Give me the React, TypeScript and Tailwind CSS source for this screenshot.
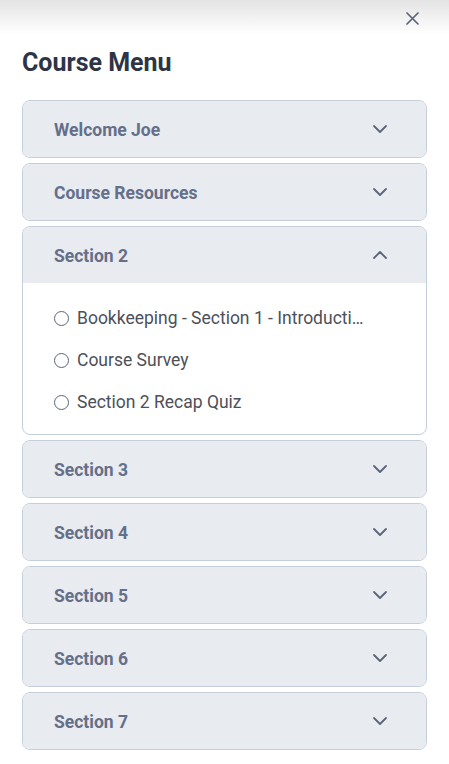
import React from "react";

const sections = [
  "Welcome Joe",
  "Course Resources",
  "Section 2",
  "Section 3",
  "Section 4",
  "Section 5",
  "Section 6",
  "Section 7",
];

const items = [
  "Bookkeeping - Section 1 - Introduction to Bookkeeping",
  "Course Survey",
  "Section 2 Recap Quiz",
];

function Chevron({ up }: { up?: boolean }) {
  return (
    <svg width="16" height="10" viewBox="0 0 16 10" fill="none" className="shrink-0">
      <polyline
        points={up ? "2,8 8,2 14,8" : "2,2 8,8 14,2"}
        stroke="#5b6478"
        strokeWidth="1.8"
        strokeLinecap="round"
        strokeLinejoin="round"
      />
    </svg>
  );
}

export default function App() {
  return (
    <div
      className="w-[449px] min-h-[764px] bg-white"
      style={{ fontFamily: "Roboto, 'Liberation Sans', sans-serif" }}
    >
      <div className="h-[34px] bg-gradient-to-b from-[#e3e3e3] to-white flex justify-end pr-[30px] pt-[12px]">
        <svg width="13" height="13" viewBox="0 0 13 13" fill="none">
          <path d="M1 1 L12 12 M12 1 L1 12" stroke="#5b6478" strokeWidth="1.7" strokeLinecap="round" />
        </svg>
      </div>
      <div className="px-[22px]">
        <h1 className="text-[25px] font-bold text-[#2d3446] leading-[30px] mt-[14px]">Course Menu</h1>
        <div className="mt-[22px] flex flex-col gap-[5px]">
          {sections.map((s) => {
            const open = s === "Section 2";
            return (
              <div
                key={s}
                className="border border-[#c5cedb] rounded-[8px] overflow-hidden bg-white"
              >
                <div className="h-[56px] bg-[#e8ebf0] flex items-center justify-between pl-[31px] pr-[38px]">
                  <span className="text-[17.5px] font-bold text-[#656f89] leading-[24px] pt-[2px]">{s}</span>
                  <Chevron up={open} />
                </div>
                {open && (
                  <div className="pl-[31px] pt-[23px] pb-[20px] flex flex-col gap-[18px]">
                    {items.map((it) => (
                      <div key={it} className="flex items-center h-[24px]">
                        <span className="w-[15px] h-[15px] rounded-full border-[1.5px] border-[#5b6478] shrink-0" />
                        <span className="ml-[8px] text-[17.5px] text-[#4d5058] truncate max-w-[288px] leading-[24px]">
                          {it}
                        </span>
                      </div>
                    ))}
                  </div>
                )}
              </div>
            );
          })}
        </div>
      </div>
    </div>
  );
}
